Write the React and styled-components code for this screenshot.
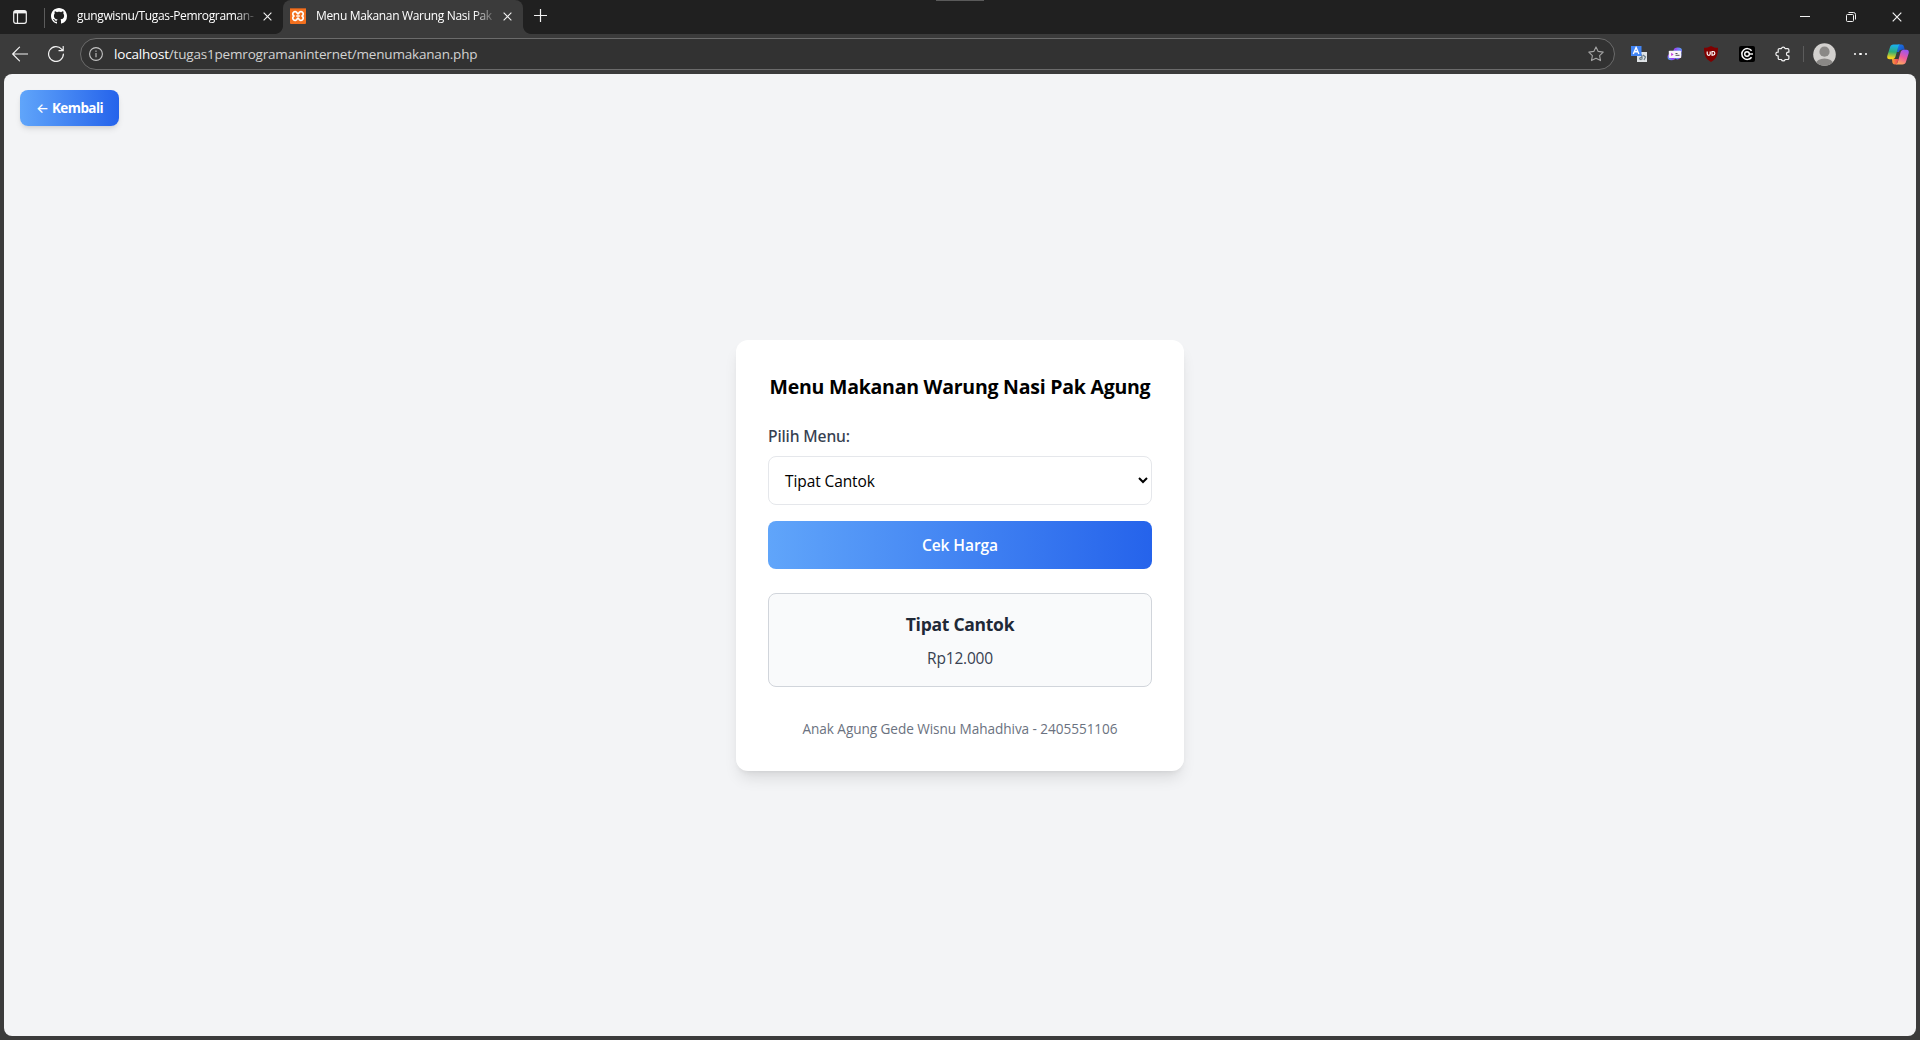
import React from "react";
import styled, { createGlobalStyle } from "styled-components";

const GlobalStyle = createGlobalStyle`
  *, *::before, *::after { box-sizing: border-box; }
  body {
    margin: 0;
    background: #3b3b3b;
    font-family: "Open Sans", "Noto Sans", sans-serif;
    overflow: hidden;
  }
  svg { display: block; flex: none; }
`;

/* Browser window */

const Window = styled.div`
  display: flex;
  flex-direction: column;
  width: 1920px;
  height: 1040px;
  background: #3b3b3b;
`;

const TabStrip = styled.header`
  position: relative;
  display: flex;
  align-items: center;
  height: 34px;
  padding-left: 13px;
  background: #202020;
  color: #ffffff;
`;

const DragHandle = styled.span`
  position: absolute;
  top: 0;
  left: 936px;
  width: 48px;
  height: 1px;
  background: #5a5a5a;
`;

const StripDivider = styled.span`
  width: 1px;
  height: 20px;
  margin: 1px 0 0 17px;
  background: #5c5c5c;
`;

const Tab = styled.div`
  position: relative;
  display: flex;
  align-items: center;
  width: ${(p) => (p.$active ? 240 : 238)}px;
  height: 34px;
  padding: 0 11px 2px ${(p) => (p.$active ? 7 : 6)}px;
  border-radius: 8px 8px 0 0;
  background: ${(p) => (p.$active ? "#3b3b3b" : "transparent")};

  &::before,
  &::after {
    content: "";
    display: ${(p) => (p.$active ? "block" : "none")};
    position: absolute;
    bottom: 0;
    width: 8px;
    height: 8px;
  }
  &::before {
    left: -8px;
    background: radial-gradient(circle at 0 0, transparent 7.5px, #3b3b3b 8.3px);
  }
  &::after {
    right: -8px;
    background: radial-gradient(circle at 100% 0, transparent 7.5px, #3b3b3b 8.3px);
  }
`;

const TabTitle = styled.span`
  width: 178px;
  margin-left: 10px;
  margin-right: auto;
  white-space: nowrap;
  font-size: 12px;
  line-height: 16px;
  letter-spacing: ${(p) => p.$tracking}px;
  mask-image: linear-gradient(to right, #000 calc(100% - 20px), rgba(0, 0, 0, 0.15) 100%);
`;

const NewTab = styled.div`
  margin: 0 auto 3px 11px;
`;

const Controls = styled.div`
  display: flex;
  align-items: center;
  gap: 36px;
  padding-right: 18px;
`;

const Toolbar = styled.nav`
  display: flex;
  align-items: center;
  height: 40px;
  padding: 0 11px 1px 12px;
  background: #3b3b3b;
`;

const NavButtons = styled.div`
  display: flex;
  align-items: center;
  gap: 20px;
  width: 68px;
`;

const AddressBar = styled.div`
  display: flex;
  align-items: center;
  width: 1535px;
  height: 32px;
  margin-top: 1px;
  padding: 0 10px 0 8px;
  border: 1px solid #6b6b6b;
  border-radius: 16px;
  background: #323232;
`;

const Url = styled.span`
  margin-left: 11px;
  margin-right: auto;
  padding-bottom: 1px;
  color: #d2d2d2;
  font-size: 13.5px;
  line-height: 20px;
  letter-spacing: -0.19px;
`;

const Host = styled.span`
  color: #ffffff;
`;

const Extensions = styled.div`
  display: flex;
  align-items: center;
  gap: 20px;
  margin: 1px auto 0 16px;
`;

const Profile = styled.div`
  display: flex;
  align-items: center;
  margin-top: 1px;
`;

const BarDivider = styled.span`
  width: 1px;
  height: 16px;
  margin-right: 9px;
  background: #5c5c5c;
`;

const Dots = styled.div`
  display: flex;
  gap: 3px;
  margin: 0 20px 0 17.5px;
`;

const Dot = styled.span`
  width: 2.5px;
  height: 2.5px;
  border-radius: 50%;
  background: #ffffff;
`;

/* Page */

const Viewport = styled.main`
  display: flex;
  flex-direction: column;
  width: 1912px;
  height: 962px;
  margin: 0 4px;
  padding: 16px;
  border-radius: 8px;
  background: #f3f4f6;
`;

const BackButton = styled.button`
  display: flex;
  align-items: center;
  align-self: flex-start;
  width: 99px;
  height: 36px;
  padding: 8px 16px;
  border: 0;
  border-radius: 8px;
  background: linear-gradient(to right, #60a5fa, #2563eb);
  box-shadow: 0 4px 6px -1px rgba(0, 0, 0, 0.1), 0 2px 4px -2px rgba(0, 0, 0, 0.1);
  color: #ffffff;
  font: 700 13.5px/20px "Open Sans", sans-serif;
  letter-spacing: -0.58px;
  white-space: nowrap;
`;

const Arrow = styled.span`
  width: 16px;
  font: 500 13.5px/20px "Inter", sans-serif;
  letter-spacing: 0;
  text-align: left;
`;

const Center = styled.div`
  display: flex;
  flex: 1;
  align-items: center;
  justify-content: center;
  padding-bottom: 35px;
`;

const Card = styled.section`
  width: 448px;
  height: 431px;
  padding: 32px;
  border-radius: 12px;
  background: #ffffff;
  box-shadow: 0 10px 15px -3px rgba(0, 0, 0, 0.1), 0 4px 6px -4px rgba(0, 0, 0, 0.1);
`;

const Heading = styled.h1`
  margin: 0 0 22px;
  color: #000000;
  font-size: 19.5px;
  font-weight: 700;
  line-height: 30px;
  letter-spacing: -0.24px;
  text-align: center;
  white-space: nowrap;
`;

const Form = styled.div`
  display: flex;
  flex-direction: column;
`;

const Label = styled.label`
  margin-bottom: 8px;
  color: #374151;
  font-family: "Noto Sans", sans-serif;
  font-size: 15.7px;
  font-weight: 500;
  line-height: 24px;
  letter-spacing: -0.15px;
`;

const Select = styled.div`
  display: flex;
  align-items: center;
  justify-content: space-between;
  height: 49px;
  margin-bottom: 16px;
  padding: 0 3px 0 16px;
  border: 1px solid #e5e7eb;
  border-radius: 8px;
  color: #000000;
  font-size: 15.5px;
  line-height: 24px;
  letter-spacing: -0.1px;
`;

const Submit = styled.button`
  height: 48px;
  border: 0;
  border-radius: 8px;
  background: linear-gradient(to right, #60a5fa, #2563eb);
  color: #ffffff;
  font: 600 15.6px/24px "Open Sans", sans-serif;
  letter-spacing: -0.1px;
`;

const Result = styled.div`
  margin-top: 24px;
  padding: 16px;
  border: 1px solid #d1d5db;
  border-radius: 8px;
  background: #f9fafb;
  text-align: center;
`;

const ItemName = styled.h2`
  margin: 0 0 8px;
  color: #1f2937;
  font-size: 17.5px;
  font-weight: 700;
  line-height: 28px;
  letter-spacing: -0.27px;
`;

const Price = styled.p`
  margin: 0;
  color: #374151;
  font-size: 15.5px;
  line-height: 24px;
  letter-spacing: -0.2px;
`;

const Author = styled.p`
  margin: 32px 0 0;
  color: #6b7280;
  font-size: 13.6px;
  line-height: 20px;
  letter-spacing: -0.06px;
  text-align: center;
  white-space: nowrap;
`;

/* Icons */

const Stroke = styled.svg.attrs({ fill: "none", stroke: "currentColor" })`
  color: ${(p) => p.$color || "#f2f2f2"};
`;

const TabActionsIcon = () => (
  <Stroke width="14" height="14" viewBox="0 0 14 14" strokeWidth="1.2">
    <rect x="0.7" y="0.7" width="12.6" height="12.6" rx="2" />
    <path d="M1 2.2h12" strokeWidth="2.4" />
    <path d="M4.5 3v10" />
  </Stroke>
);

const GithubIcon = () => (
  <svg width="16" height="16" viewBox="0 0 16 16" fill="#fff">
    <path d="M8 0C3.58 0 0 3.58 0 8c0 3.54 2.29 6.53 5.47 7.59.4.07.55-.17.55-.38 0-.19-.01-.82-.01-1.49-2.01.37-2.53-.49-2.69-.94-.09-.23-.48-.94-.82-1.13-.28-.15-.68-.52-.01-.53.63-.01 1.08.58 1.23.82.72 1.21 1.87.87 2.33.66.07-.52.28-.87.51-1.07-1.78-.2-3.64-.89-3.64-3.95 0-.87.31-1.59.82-2.15-.08-.2-.36-1.02.08-2.12 0 0 .67-.21 2.2.82.64-.18 1.32-.27 2-.27s1.36.09 2 .27c1.53-1.04 2.2-.82 2.2-.82.44 1.1.16 1.92.08 2.12.51.56.82 1.27.82 2.15 0 3.07-1.87 3.75-3.65 3.95.29.25.54.73.54 1.48 0 1.07-.01 1.93-.01 2.2 0 .21.15.46.55.38A8.01 8.01 0 0 0 16 8c0-4.42-3.58-8-8-8Z" />
  </svg>
);

const XamppIcon = () => (
  <svg width="16" height="16" viewBox="0 0 16 16" fill="none">
    <rect width="16" height="16" rx="1" fill="#f3701e" />
    <path d="M0 .5h16" stroke="#b85a22" />
    <path
      d="M7.300 5.400A2.300 2.300 0 1 0 4 8A2.300 2.300 0 1 0 7.300 10.600Q8 9.800 8.700 10.600A2.300 2.300 0 1 0 12 8A2.300 2.300 0 1 0 8.700 5.400Q8 6.200 7.300 5.400Z"
      stroke="#fff"
      strokeWidth="1.700"
      strokeLinejoin="round"
    />
    <path d="M6.200 8h3.600" stroke="#fff" strokeWidth="1.500" />
  </svg>
);

const CrossIcon = ({ size }) => (
  <Stroke width={size} height={size} viewBox="0 0 10 10" strokeWidth="1.2">
    <path d="M.7.7l8.600 8.600M9.300.7L.7 9.300" />
  </Stroke>
);

const PlusIcon = () => (
  <Stroke width="13" height="13" viewBox="0 0 13 13" strokeWidth="1.2">
    <path d="M6.500 0v13M0 6.500h13" />
  </Stroke>
);

const MinimizeIcon = () => (
  <Stroke width="10" height="10" viewBox="0 0 10 10">
    <path d="M0 4.500h10" />
  </Stroke>
);

const RestoreIcon = () => (
  <Stroke width="10" height="10" viewBox="0 0 10 10">
    <rect x=".5" y="2.500" width="7" height="7" rx="1" />
    <path d="M2.500 .500h5a2 2 0 0 1 2 2v5" />
  </Stroke>
);

const BackIcon = () => (
  <Stroke width="16" height="16" viewBox="0 0 16 16" strokeWidth="1.2" strokeLinecap="round" strokeLinejoin="round">
    <path d="M15.500 8H.8M7.500 1.200L.7 8l6.800 6.800" />
  </Stroke>
);

const ReloadIcon = () => (
  <Stroke width="16" height="16" viewBox="0 0 16 16" strokeWidth="1.200" strokeLinecap="round" strokeLinejoin="round">
    <path d="M15.400 8A7.400 7.400 0 1 1 13.600 3.200L15.200 4.700M15.200.5v4.200h-4.200" />
  </Stroke>
);

const InfoIcon = () => (
  <Stroke $color="#c4c4c4" width="14" height="14" viewBox="0 0 14 14" strokeWidth="1.100">
    <circle cx="7" cy="7" r="6.400" />
    <path d="M7 6v4.300" />
    <circle cx="7" cy="4.100" r=".4" fill="currentColor" strokeWidth=".6" />
  </Stroke>
);

const StarIcon = () => (
  <Stroke $color="#a4a4a4" width="16" height="16" viewBox="0 0 16 16" strokeWidth="1.100" strokeLinejoin="round">
    <path d="M8 .9l2.200 4.500 5 .7-3.600 3.500.9 5L8 12.200l-4.500 2.400.9-5L.8 6.100l5-.7L8 .9Z" />
  </Stroke>
);

const TranslateIcon = () => (
  <svg width="16" height="16" viewBox="0 0 16 16" fill="none">
    <rect x="6" y="6" width="10" height="10" fill="#dfe3e6" />
    <path d="M8 9.500c2-1.500 3-.5 3 1v3M11 11.500c-3-.5-3 2.500-.5 2M12 9l2.500 2-1.500 3" stroke="#6b7d88" strokeWidth="1.200" />
    <rect width="10.500" height="10" fill="#4285f4" />
    <path d="M2.300 8l2.800-6.500L7.900 8M3.300 5.800h3.600" stroke="#fff" strokeWidth="1.400" />
  </svg>
);

const CaptureIcon = () => (
  <svg width="16" height="16" viewBox="0 0 16 16" fill="none">
    <defs>
      <linearGradient id="cap" x1="0" y1="1" x2="1" y2="0">
        <stop offset="0" stopColor="#27d3f5" />
        <stop offset=".45" stopColor="#a13cf0" />
        <stop offset="1" stopColor="#3ec5ff" />
      </linearGradient>
    </defs>
    <ellipse cx="4.500" cy="11" rx="4" ry="3.300" fill="url(#cap)" />
    <ellipse cx="10.800" cy="4.600" rx="4.200" ry="3.200" fill="url(#cap)" />
    <ellipse cx="10.500" cy="8.500" rx="4" ry="5" fill="url(#cap)" />
    <rect x="1.800" y="4.800" width="12.400" height="7.200" rx=".8" fill="#f7f4fb" />
    <path d="M4.200 6.800l2.400 1.600-2.400 1.600Z" fill="#c23bdc" />
    <path d="M8.500 7.500h2M8.500 9.300h4" stroke="#555" strokeWidth="1" />
  </svg>
);

const ShieldIcon = () => (
  <svg width="16" height="16" viewBox="0 0 16 16" fill="none">
    <path d="M8 0c2.200 1.300 4.400 1.800 7 1.800C15 9 13.600 13 8 16 2.400 13 1 9 1 1.800 3.600 1.800 5.800 1.300 8 0Z" fill="#800000" />
    <path d="M4.200 5.500v2.300a1.300 1.300 0 0 0 3 0V5.500M9 5.500v3.700h1a1.850 1.850 0 0 0 0-3.700h-1Z" stroke="#fff" strokeWidth="1.200" />
  </svg>
);

const TargetIcon = () => (
  <svg width="16" height="16" viewBox="0 0 16 16" fill="none">
    <rect width="16" height="16" rx="2" fill="#000" />
    <path d="M12.600 4.800A5.400 5.400 0 1 0 12.600 11.200" stroke="#fff" strokeWidth="1.500" />
    <circle cx="8" cy="8" r="2.300" stroke="#fff" strokeWidth="1.400" />
    <path d="M10 8h4" stroke="#fff" strokeWidth="1.400" />
  </svg>
);

const PuzzleIcon = () => (
  <Stroke width="16" height="16" viewBox="0 0 16 16" strokeWidth="1.200" strokeLinejoin="round">
    <path d="M4.500 2.600H6.400a1.900 1.900 0 0 1 3.700 0h2.500c.8 0 1.300.5 1.300 1.300v2.300h-.6a1.850 1.850 0 0 0 0 3.700h.6v2.300c0 .8-.5 1.300-1.300 1.300h-2.500a1.900 1.900 0 0 1-3.700 0H4.500c-.8 0-1.300-.5-1.300-1.300V9.900h-.500a1.850 1.850 0 0 1 0-3.700h.5V3.900c0-.8.5-1.300 1.300-1.300Z" />
  </Stroke>
);

const AvatarIcon = () => (
  <svg width="23" height="23" viewBox="0 0 23 23">
    <defs>
      <clipPath id="face">
        <circle cx="11.500" cy="11.500" r="11.300" />
      </clipPath>
    </defs>
    <g clipPath="url(#face)">
      <rect width="23" height="23" fill="#d2d0ce" />
      <circle cx="11.500" cy="8.700" r="5.100" fill="#8a8886" />
      <ellipse cx="11.500" cy="20.800" rx="8.600" ry="5.200" fill="#8a8886" />
    </g>
  </svg>
);

const CopilotIcon = () => (
  <svg width="22" height="21" viewBox="0 0 22 21">
    <defs>
      <linearGradient id="cpA" x1=".4" y1="0" x2=".3" y2="1">
        <stop offset="0" stopColor="#18b0f2" />
        <stop offset=".5" stopColor="#2fae78" />
        <stop offset=".9" stopColor="#f2d21c" />
      </linearGradient>
      <linearGradient id="cpB" x1=".7" y1="0" x2=".3" y2="1">
        <stop offset="0" stopColor="#9a56f2" />
        <stop offset=".5" stopColor="#ee5a9c" />
        <stop offset="1" stopColor="#ffab5c" />
      </linearGradient>
      <linearGradient id="cpC" x1="0" y1="0" x2="1" y2="1">
        <stop offset="0" stopColor="#1c7df0" />
        <stop offset="1" stopColor="#1646b8" />
      </linearGradient>
      <linearGradient id="cpD" x1="0" y1="0" x2="1" y2="0">
        <stop offset="0" stopColor="#f9a03c" />
        <stop offset="1" stopColor="#ee3f55" />
      </linearGradient>
    </defs>
    <path d="M11 .5h3.500c1.400 0 2 .8 2.400 2l.9 3.200h-3c-1.700 0-2.600.9-3 2.300L10 8Z" fill="url(#cpC)" />
    <path d="M5 15h6.500L10 20.500H7.800c-1.300 0-2-.8-2.400-2Z" fill="url(#cpD)" />
    <path d="M6.500.5h6.700c-1 .3-1.600 1.100-1.900 2.200L8.500 12.500C8 14.300 7 15.200 5.200 15.200H2.600C.5 15.200-.2 13.700.4 11.600L3 3.200C3.500 1.500 4.600.5 6.500.5Z" fill="url(#cpA)" />
    <path d="M15.500 20.500H8.800c1-.3 1.600-1.100 1.900-2.200L13.500 8.500c.5-1.800 1.500-2.700 3.300-2.700h2.600c2.100 0 2.800 1.500 2.200 3.600L19 17.800c-.5 1.700-1.600 2.700-3.500 2.700Z" fill="url(#cpB)" />
  </svg>
);

const ChevronIcon = () => (
  <Stroke $color="#000" width="10" height="8" viewBox="0 0 10 8" strokeWidth="2">
    <path d="M1 1l4 4 4-4" />
  </Stroke>
);

export default function App() {
  return (
    <Window>
      <GlobalStyle />
      <TabStrip>
        <DragHandle />
        <TabActionsIcon />
        <StripDivider />
        <Tab>
          <GithubIcon />
          <TabTitle $tracking={-0.34}>gungwisnu/Tugas-Pemrograman-</TabTitle>
          <CrossIcon size={9} />
        </Tab>
        <Tab $active>
          <XamppIcon />
          <TabTitle $tracking={-0.33}>Menu Makanan Warung Nasi Pak</TabTitle>
          <CrossIcon size={9} />
        </Tab>
        <NewTab>
          <PlusIcon />
        </NewTab>
        <Controls>
          <MinimizeIcon />
          <RestoreIcon />
          <CrossIcon size={10} />
        </Controls>
      </TabStrip>

      <Toolbar>
        <NavButtons>
          <BackIcon />
          <ReloadIcon />
        </NavButtons>
        <AddressBar>
          <InfoIcon />
          <Url>
            <Host>localhost</Host>/tugas1pemrogramaninternet/menumakanan.php
          </Url>
          <StarIcon />
        </AddressBar>
        <Extensions>
          <TranslateIcon />
          <CaptureIcon />
          <ShieldIcon />
          <TargetIcon />
          <PuzzleIcon />
        </Extensions>
        <Profile>
          <BarDivider />
          <AvatarIcon />
          <Dots>
            <Dot />
            <Dot />
            <Dot />
          </Dots>
          <CopilotIcon />
        </Profile>
      </Toolbar>

      <Viewport>
        <BackButton>
          <Arrow>←</Arrow>Kembali
        </BackButton>
        <Center>
          <Card>
            <Heading>Menu Makanan Warung Nasi Pak Agung</Heading>
            <Form>
              <Label>Pilih Menu:</Label>
              <Select>
                Tipat Cantok
                <ChevronIcon />
              </Select>
              <Submit>Cek Harga</Submit>
            </Form>
            <Result>
              <ItemName>Tipat Cantok</ItemName>
              <Price>Rp12.000</Price>
            </Result>
            <Author>Anak Agung Gede Wisnu Mahadhiva - 2405551106</Author>
          </Card>
        </Center>
      </Viewport>
    </Window>
  );
}
